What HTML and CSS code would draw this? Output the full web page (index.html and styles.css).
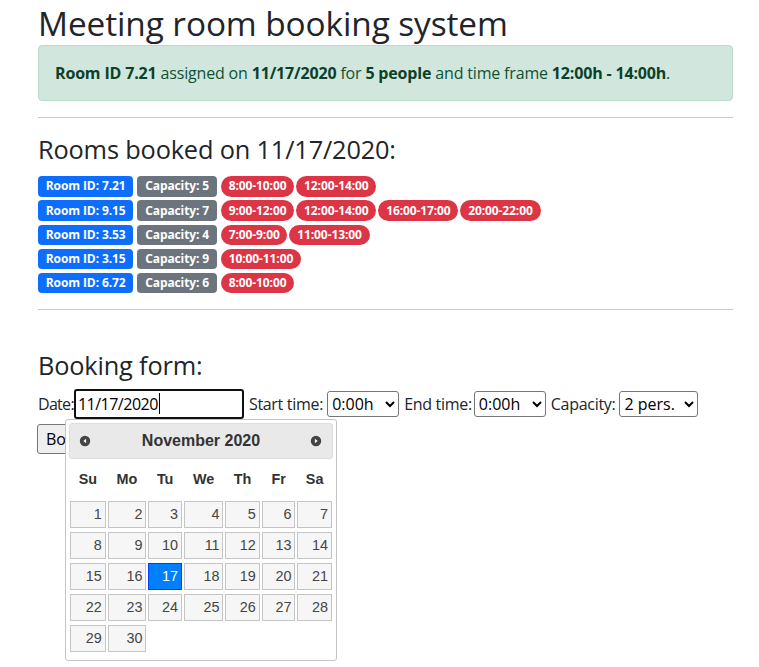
FILE: index.html
```html
<!DOCTYPE html>
<html lang="en">
<head>
<meta charset="utf-8">
<title>Meeting room booking system</title>
<link rel="stylesheet" href="styles.css">
</head>
<body>
<main class="page">
  <h1 class="page-title">Meeting room booking system</h1>
  <div class="alert alert-success">
    <b>Room ID 7.21</b> assigned on <b>11/17/2020</b> for <b>5 people</b> and time frame <b>12:00h - 14:00h</b>.
  </div>
  <hr class="divider">
  <h3 class="section-title">Rooms booked on 11/17/2020:</h3>
  <div class="rooms">
    <div class="room-row"><span class="badge bg-primary">Room ID: 7.21</span> <span class="badge bg-secondary">Capacity: 5</span> <span class="slots"><span class="badge pill bg-danger">8:00-10:00</span><span class="badge pill bg-danger">12:00-14:00</span></span></div>
    <div class="room-row"><span class="badge bg-primary">Room ID: 9.15</span> <span class="badge bg-secondary">Capacity: 7</span> <span class="slots"><span class="badge pill bg-danger">9:00-12:00</span><span class="badge pill bg-danger">12:00-14:00</span><span class="badge pill bg-danger">16:00-17:00</span><span class="badge pill bg-danger">20:00-22:00</span></span></div>
    <div class="room-row"><span class="badge bg-primary">Room ID: 3.53</span> <span class="badge bg-secondary">Capacity: 4</span> <span class="slots"><span class="badge pill bg-danger">7:00-9:00</span><span class="badge pill bg-danger">11:00-13:00</span></span></div>
    <div class="room-row"><span class="badge bg-primary">Room ID: 3.15</span> <span class="badge bg-secondary">Capacity: 9</span> <span class="slots"><span class="badge pill bg-danger">10:00-11:00</span></span></div>
    <div class="room-row"><span class="badge bg-primary">Room ID: 6.72</span> <span class="badge bg-secondary">Capacity: 6</span> <span class="slots"><span class="badge pill bg-danger">8:00-10:00</span></span></div>
  </div>
  <hr class="divider">
  <h3 class="section-title form-title">Booking form:</h3>
  <form class="booking-form">
    <div class="fields">
      <label class="field-label label-date" for="date">Date:</label>
      <span class="date-wrap">
        <input class="date-input" id="date" type="text" value="11/17/2020">
        <span class="caret"></span>
      </span>
      <label class="field-label" for="start">Start time:</label>
      <select class="time-select" id="start"><option>0:00h</option><option>1:00h</option></select>
      <label class="field-label label-end" for="end">End time:</label>
      <select class="time-select" id="end"><option>0:00h</option><option>1:00h</option></select>
      <label class="field-label" for="cap">Capacity:</label>
      <select class="cap-select" id="cap"><option>2 pers.</option><option>3 pers.</option></select>
    </div>
    <div class="actions">
      <button class="book-btn" type="button">Book</button>
    </div>
  </form>
</main>

<div class="datepicker">
  <div class="dp-header">
    <a class="dp-nav dp-prev" title="Prev"><svg width="14" height="14" viewBox="0 0 14 14"><circle cx="7" cy="7" r="5.2" fill="#444"/><path d="M8.1 4.7 L5.3 7 L8.1 9.3 Z" fill="#fff"/></svg></a>
    <div class="dp-title">November 2020</div>
    <a class="dp-nav dp-next" title="Next"><svg width="14" height="14" viewBox="0 0 14 14"><circle cx="7" cy="7" r="5.2" fill="#444"/><path d="M5.9 4.7 L8.7 7 L5.9 9.3 Z" fill="#fff"/></svg></a>
  </div>
  <table class="dp-calendar">
    <thead>
      <tr><th>Su</th><th>Mo</th><th>Tu</th><th>We</th><th>Th</th><th>Fr</th><th>Sa</th></tr>
    </thead>
    <tbody>
      <tr><td><a class="day">1</a></td><td><a class="day">2</a></td><td><a class="day">3</a></td><td><a class="day">4</a></td><td><a class="day">5</a></td><td><a class="day">6</a></td><td><a class="day">7</a></td></tr>
      <tr><td><a class="day">8</a></td><td><a class="day">9</a></td><td><a class="day">10</a></td><td><a class="day">11</a></td><td><a class="day">12</a></td><td><a class="day">13</a></td><td><a class="day">14</a></td></tr>
      <tr><td><a class="day">15</a></td><td><a class="day">16</a></td><td><a class="day active">17</a></td><td><a class="day">18</a></td><td><a class="day">19</a></td><td><a class="day">20</a></td><td><a class="day">21</a></td></tr>
      <tr><td><a class="day">22</a></td><td><a class="day">23</a></td><td><a class="day">24</a></td><td><a class="day">25</a></td><td><a class="day">26</a></td><td><a class="day">27</a></td><td><a class="day">28</a></td></tr>
      <tr><td><a class="day">29</a></td><td><a class="day">30</a></td><td></td><td></td><td></td><td></td><td></td></tr>
    </tbody>
  </table>
</div>
</body>
</html>
```
FILE: styles.css
```css
*, *::before, *::after { box-sizing: border-box; }

body {
  margin: 0;
  font-family: "Open Sans", "Noto Sans", sans-serif;
  font-size: 16px;
  line-height: 1.5;
  color: #212529;
  background: #fff;
  letter-spacing: -0.17px;
}

.page {
  padding: 0 26px 0 38px;
}

.page-title {
  margin: 0;
  padding-top: 1px;
  font-size: 33.4px;
  font-weight: 400;
  line-height: 44px;
  letter-spacing: -0.1px;
}

.alert {
  padding: 15px 16px;
  margin-bottom: 16px;
  border: 1px solid #badbcc;
  border-radius: 4px;
}
.alert-success {
  color: #0f5132;
  background: #d1e7dd;
}
.alert b {
  font-weight: 700;
  color: #0c4128;
}

.divider {
  margin: 16px 0;
  border: 0;
  border-top: 1px solid #c8c9ca;
  height: 0;
}

.section-title {
  margin: 0 0 8px;
  font-size: 25.35px;
  font-weight: 400;
  line-height: 1.2;
}
.form-title {
  margin-top: 40px;
}

.room-row {
  line-height: 24px;
}

.badge {
  display: inline-block;
  padding: 4.2px 7.8px;
  font-size: 12px;
  font-weight: 700;
  line-height: 1;
  color: #fff;
  text-align: center;
  white-space: nowrap;
  vertical-align: baseline;
  border-radius: 4px;
  letter-spacing: -0.1px;
}
.badge.pill { border-radius: 50rem; }
.badge.pill + .badge.pill { margin-left: 2px; }
.bg-primary { background: #0d6efd; }
.bg-secondary { background: #6c757d; }
.bg-danger { background: #dc3545; }

.fields {
  display: flex;
  align-items: center;
  height: 30px;
}
.field-label {
  margin-right: 4px;
  letter-spacing: -0.3px;
}
.label-date {
  margin-right: 0;
  letter-spacing: -0.7px;
}
.label-end { margin-right: 2px; }

.date-wrap {
  position: relative;
  display: inline-flex;
  margin-right: 5px;
}
.date-input {
  width: 170px;
  height: 30px;
  padding: 1px 2px;
  font: inherit;
  letter-spacing: -0.5px;
  color: #000;
  border: 2px solid #101010;
  border-radius: 3px;
  outline: none;
  background: #fff;
}
.caret {
  position: absolute;
  left: 85px;
  top: 4px;
  width: 1px;
  height: 21px;
  background: #000;
}

.time-select, .cap-select {
  height: 26px;
  margin-right: 5px;
  font: inherit;
  line-height: normal;
  letter-spacing: 0;
  color: #000;
  border: 1px solid #767676;
  border-radius: 3px;
  background: #fff;
}
.time-select { width: 72px; }
.cap-select { width: 79px; }

.actions {
  margin-top: 5px;
  margin-left: -1px;
}
.book-btn {
  height: 30px;
  padding: 1px 8px;
  font: inherit;
  color: #000;
  background: #efefef;
  border: 1px solid #767676;
  border-radius: 3px;
}

/* jQuery UI style datepicker popup */
.datepicker {
  position: absolute;
  top: 419px;
  left: 65px;
  width: 272px;
  padding: 3.2px 3.2px 0;
  font-family: "Liberation Sans", Arial, sans-serif;
  font-size: 16px;
  letter-spacing: 0;
  color: #333;
  background: #fff;
  border: 1px solid #c5c5c5;
  border-radius: 3px;
}

.dp-header {
  display: flex;
  align-items: center;
  height: 36px;
  padding: 0 2px;
  background: #e9e9e9;
  border: 1px solid #ddd;
  border-radius: 3px;
  color: #333;
  font-weight: 700;
}
.dp-nav {
  display: flex;
  align-items: center;
  justify-content: center;
  width: 28.8px;
  height: 28.8px;
}
.dp-prev svg { margin-left: -4px; }
.dp-next svg { margin-left: 2px; }
.dp-title {
  flex: 1;
  text-align: center;
  line-height: 28.8px;
  font-size: 16px;
}

.dp-calendar {
  width: 100%;
  margin: 0 0 5.76px;
  border-collapse: collapse;
  font-size: 14.4px;
}
.dp-calendar th {
  padding: 10px 4.32px;
  line-height: 20px;
  font-weight: 700;
  text-align: center;
  border: 0;
}
.dp-calendar td {
  padding: 2px 1px;
  border: 0;
}
.day {
  display: block;
  padding: 2.88px;
  line-height: 19.24px;
  text-align: right;
  text-decoration: none;
  color: #454545;
  background: #f6f6f6;
  border: 1px solid #c5c5c5;
}
.day.active {
  color: #fff;
  background: #007fff;
  border-color: #003eff;
}
```
